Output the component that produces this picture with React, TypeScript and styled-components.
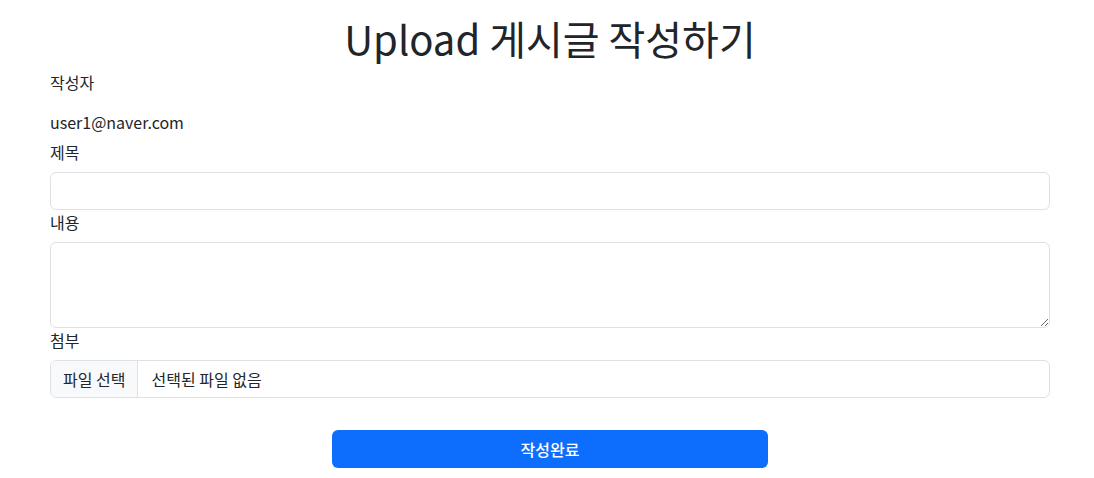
import styled, { createGlobalStyle } from 'styled-components';

const GlobalStyle = createGlobalStyle`
    body {
        margin: 0;
        background: #ffffff;
        color: #212529;
        font-family: "Noto Sans CJK KR", "Noto Sans", sans-serif;
        font-size: 16px;
        line-height: 1.5;
    }
    * {
        box-sizing: border-box;
    }
`;

const Page = styled.main`
    width: 1000px;
    margin-left: 50px;
    padding-top: 14px;
`;

const Title = styled.h1`
    margin: 0 0 8px;
    font-size: 40px;
    font-weight: 400;
    line-height: 1.2;
    text-align: center;
`;

const Label = styled.label`
    display: block;
    margin-bottom: 8px;
    font-size: 16px;
`;

const Writer = styled.div`
    margin: 8px 0 6px;
`;

const Field = styled.div`
    display: flex;
    flex-direction: column;
`;

const Input = styled.input`
    display: block;
    width: 100%;
    height: 38px;
    padding: 6px 12px;
    border: 1px solid #dee2e6;
    border-radius: 6px;
    font: inherit;
    color: #212529;
    background: #ffffff;
`;

const TextArea = styled.textarea`
    display: block;
    width: 100%;
    height: 86px;
    padding: 6px 12px;
    border: 1px solid #dee2e6;
    border-radius: 6px;
    font: inherit;
    color: #212529;
    resize: vertical;
`;

const FileBox = styled.div`
    display: flex;
    align-items: center;
    height: 38px;
    border: 1px solid #dee2e6;
    border-radius: 6px;
    overflow: hidden;
`;

const FileButton = styled.span`
    display: flex;
    align-items: center;
    height: 100%;
    padding: 0 12px;
    background: #f8f9fa;
    border-right: 1px solid #dee2e6;
`;

const FileName = styled.span`
    padding-left: 13px;
`;

const Actions = styled.div`
    display: flex;
    justify-content: center;
    margin-top: 32px;
`;

const Submit = styled.button`
    width: 436px;
    height: 38px;
    border: none;
    border-radius: 6px;
    background: #0d6efd;
    color: #ffffff;
    font: inherit;
    font-weight: 500;
    cursor: pointer;
`;

const App = () => {
    return (
        <>
            <GlobalStyle />
            <Page>
                <Title>Upload 게시글 작성하기</Title>
                <Field>
                    <Label>작성자</Label>
                    <Writer>user1@naver.com</Writer>
                </Field>
                <Field>
                    <Label>제목</Label>
                    <Input type="text" />
                </Field>
                <Field>
                    <Label>내용</Label>
                    <TextArea />
                </Field>
                <Field>
                    <Label>첨부</Label>
                    <FileBox>
                        <FileButton>파일 선택</FileButton>
                        <FileName>선택된 파일 없음</FileName>
                    </FileBox>
                </Field>
                <Actions>
                    <Submit type="button">작성완료</Submit>
                </Actions>
            </Page>
        </>
    );
};

export default App;
